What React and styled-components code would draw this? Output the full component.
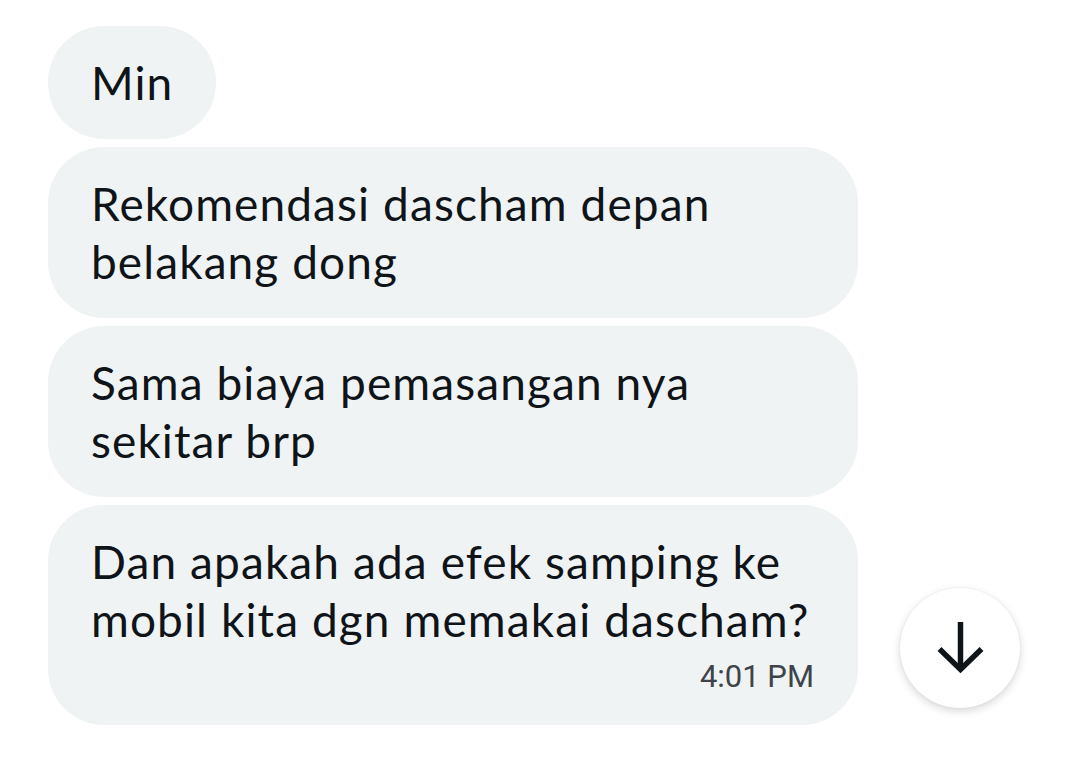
import React from "react";
import styled, { createGlobalStyle } from "styled-components";

const GlobalStyle = createGlobalStyle`
  html, body {
    margin: 0;
    padding: 0;
    background: #ffffff;
  }
  body {
    font-family: Lato, "Noto Sans", sans-serif;
    color: #0f1419;
  }
`;

const SPage = styled.div`
  position: relative;
  width: 1080px;
  height: 761px;
  overflow: hidden;
  background: #ffffff;
`;

const SThread = styled.div`
  display: flex;
  flex-direction: column;
  align-items: flex-start;
  gap: 8px;
  padding: 26px 0 0 48px;
`;

const SBubble = styled.div`
  box-sizing: border-box;
  width: fit-content;
  max-width: 810px;
  padding: ${(p) => (p.$withTime ? "28px 43px 31px" : "28px 43px 27px")};
  background: #eff3f4;
  border-radius: 56px;
  font-family: Lato, "Noto Sans", sans-serif;
  font-size: 46px;
  line-height: 58px;
  letter-spacing: 1.1px;
  color: #0f1419;
`;

const STime = styled.div`
  margin-top: 11px;
  text-align: right;
  padding-right: 1px;
  font-family: Roboto, "Liberation Sans", sans-serif;
  font-size: 31px;
  line-height: 34px;
  letter-spacing: 0;
  color: #3e4449;
`;

const SDownButton = styled.button`
  position: absolute;
  left: 900px;
  top: 588px;
  width: 120px;
  height: 120px;
  padding: 0;
  border: none;
  border-radius: 50%;
  background: #ffffff;
  box-shadow: 0 3px 8px rgba(0, 0, 0, 0.16), 0 0 2px rgba(0, 0, 0, 0.06);
  display: flex;
  align-items: center;
  justify-content: center;
  cursor: pointer;
`;

function ArrowDown() {
  return (
    <svg width="120" height="120" viewBox="0 0 120 120" fill="none">
      <path d="M60.5 34 V82" stroke="#0f1419" strokeWidth="5.5" />
      <path
        d="M39.5 61 L60.5 81.5 L81.5 61"
        stroke="#0f1419"
        strokeWidth="5.5"
        strokeLinejoin="miter"
      />
    </svg>
  );
}

const messages = [
  { id: 1, text: "Min" },
  { id: 2, text: "Rekomendasi dascham depan belakang dong" },
  { id: 3, text: "Sama biaya pemasangan nya sekitar brp" },
  { id: 4, text: "Dan apakah ada efek samping ke mobil kita dgn memakai dascham?", time: "4:01 PM" },
];

function App() {
  return (
    <>
      <GlobalStyle />
      <SPage>
        <SThread>
          {messages.map((m) => (
            <SBubble key={m.id} $withTime={!!m.time}>
              {m.text}
              {m.time && <STime>{m.time}</STime>}
            </SBubble>
          ))}
        </SThread>
        <SDownButton aria-label="Scroll to bottom">
          <ArrowDown />
        </SDownButton>
      </SPage>
    </>
  );
}

export default App;
